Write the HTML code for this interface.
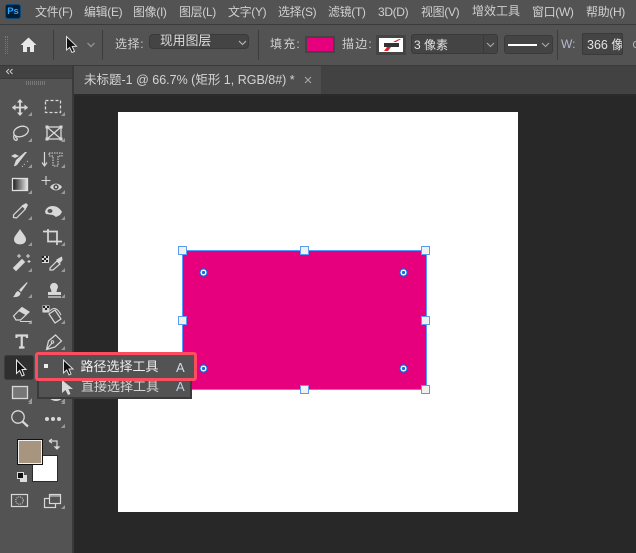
<!DOCTYPE html>
<html lang="zh"><head><meta charset="utf-8"><title>Photoshop</title>
<style>
html,body{margin:0;padding:0}
body{width:636px;height:553px;position:relative;overflow:hidden;background:#282828;font-family:"Liberation Sans","Noto Sans CJK SC",sans-serif;color:#cfcfcf}
.a{position:absolute}
.t{position:absolute;white-space:nowrap;line-height:16px;font-size:12px}
.m{letter-spacing:-.35px}
svg{position:absolute;overflow:visible}
.h{position:absolute;width:9px;height:9px;box-sizing:border-box;background:#f0f0f0;border:1.5px solid #5a9cf0}
.p{position:absolute;width:9px;height:9px;border-radius:50%;background:radial-gradient(circle,#1668d8 0 1.6px,#eaf4ff 1.7px 2.9px,#1a6fe0 3px 4px,#7a2a9a 4.1px 4.5px)}
</style></head><body>
<div class="a" style="left:0;top:0;width:636px;height:24px;background:#535353"></div>
<div class="a" style="left:0;top:24px;width:636px;height:1px;background:#3a3a3a"></div>
<div class="a" style="left:0;top:25px;width:636px;height:40px;background:#535353"></div>
<div class="a" style="left:0;top:65px;width:636px;height:1px;background:#3a3a3a"></div>
<div class="a" style="left:5px;top:4px;width:16px;height:15px;box-sizing:border-box;background:#001e36;border:1px solid #0d4a78;border-radius:3px;color:#31a8ff;font:bold 9.500px/13px 'Liberation Sans',sans-serif;text-align:center">Ps</div>

<div class="t m" style="left:35px;top:4px">文件(F)</div>
<div class="t m" style="left:84px;top:4px">编辑(E)</div>
<div class="t m" style="left:133px;top:4px">图像(I)</div>
<div class="t m" style="left:179px;top:4px">图层(L)</div>
<div class="t m" style="left:228px;top:4px">文字(Y)</div>
<div class="t m" style="left:278px;top:4px">选择(S)</div>
<div class="t m" style="left:328px;top:4px">滤镜(T)</div>
<div class="t m" style="left:378px;top:4px">3D(D)</div>
<div class="t m" style="left:421px;top:4px">视图(V)</div>
<div class="t" style="left:472px;top:3px">增效工具</div>
<div class="t m" style="left:532px;top:4px">窗口(W)</div>
<div class="t m" style="left:586px;top:4px">帮助(H)</div>

<div class="a" style="left:5px;top:36px;width:3px;height:18px;border-left:1px dotted #777;border-right:1px dotted #777;box-sizing:border-box"></div>
<svg style="left:20px;top:37px" width="17" height="16"><path d="M8.500 .5L16.500 8H14V15H10V10H7V15H3V8H.5Z" fill="#e8e8e8"/></svg>
<div class="a" style="left:53px;top:30px;width:1px;height:30px;background:#3c3c3c"></div>
<svg style="left:65px;top:36px" width="13" height="18"><path d="M1.500 .5L1.500 14L4.700 11.500L7 16.500L9.500 15.500L7.200 10.500L11.500 10.200Z" fill="#111" stroke="#e0e0e0" stroke-width="1"/></svg>
<svg style="left:86px;top:42px" width="10" height="6"><path d="M1.500 1L5 4.500L8.500 1" fill="none" stroke="#999" stroke-width="1.200"/></svg>
<div class="a" style="left:102px;top:30px;width:1px;height:30px;background:#3c3c3c"></div>
<div class="t" style="left:115px;top:36px;letter-spacing:.6px">选择:</div>
<div class="a" style="left:149px;top:34px;width:100px;height:15px;box-sizing:border-box;background:#444;border:1px solid #3a3a3a;border-radius:4px"></div>
<div class="t" style="left:160px;top:33px;font-size:12.800px;color:#dedede">现用图层</div>
<svg style="left:238px;top:40px" width="9" height="6"><path d="M1 1L4.500 4.500L8 1" fill="none" stroke="#bbb" stroke-width="1.100"/></svg>
<div class="a" style="left:258px;top:30px;width:1px;height:30px;background:#3c3c3c"></div>
<div class="t" style="left:270px;top:36px;letter-spacing:1.200px">填充:</div>
<div class="a" style="left:305px;top:36px;width:30px;height:17px;box-sizing:border-box;background:#e6007e;border:2px solid #444"></div>
<div class="t" style="left:342px;top:36px;letter-spacing:1.200px">描边:</div>
<div class="a" style="left:376px;top:35px;width:30px;height:20px;box-sizing:border-box;border:3px solid #444;background:#fff"></div>
<div class="a" style="left:384px;top:43px;width:15px;height:4px;background:#333"></div>
<svg style="left:378px;top:37px" width="26" height="15"><path d="M15 5L21 2H23L18 5ZM6 14L9 10H13L10 14Z" fill="#e2202c"/></svg>
<div class="a" style="left:411px;top:34px;width:87px;height:20px;box-sizing:border-box;background:#444;border:1px solid #3a3a3a;border-radius:3px"></div>
<div class="a" style="left:483px;top:35px;width:1px;height:18px;background:#3a3a3a"></div>
<div class="t" style="left:414px;top:37px;color:#e2e2e2;font-size:12px">3 像素</div>
<svg style="left:486px;top:42px" width="9" height="6"><path d="M1 1L4.500 4.500L8 1" fill="none" stroke="#aaa" stroke-width="1.100"/></svg>
<div class="a" style="left:504px;top:35px;width:49px;height:19px;box-sizing:border-box;background:#444;border:1px solid #3a3a3a;border-radius:3px"></div>
<div class="a" style="left:508px;top:44px;width:29px;height:2px;background:#fff"></div>
<svg style="left:541px;top:42px" width="9" height="6"><path d="M1 1L4.500 4.500L8 1" fill="none" stroke="#aaa" stroke-width="1.100"/></svg>
<div class="a" style="left:557px;top:30px;width:1px;height:30px;background:#3c3c3c"></div>
<div class="t" style="left:561px;top:36px;color:#b0bccb">W:</div>
<div class="a" style="left:582px;top:33px;width:41px;height:22px;box-sizing:border-box;background:#444;border:1px solid #3a3a3a;border-radius:2px"></div>
<div class="a" style="left:583px;top:34px;width:39px;height:20px;overflow:hidden"><div class="t" style="left:4px;top:3px;font-size:12.500px;color:#e2e2e2">366 像素</div></div>
<div class="a" style="left:633px;top:41px;width:3px;height:7px;border:1px solid #bbb;border-right:0;border-radius:4px 0 0 4px;box-sizing:border-box"></div>

<!-- tab bar -->
<div class="a" style="left:73px;top:66px;width:563px;height:29px;background:#424242"></div>
<div class="a" style="left:74px;top:66px;width:247px;height:29px;background:#4e4e4e"></div>
<div class="a" style="left:73px;top:94px;width:563px;height:2px;background:#2b2b2b"></div>
<div class="t" style="left:84px;top:72px;color:#d4d4d4;font-size:12.500px">未标题-1 @ 66.7% (矩形 1, RGB/8#) *</div>
<svg style="left:304px;top:76px" width="8" height="8"><path d="M1 1L7 7M7 1L1 7" stroke="#aaa" stroke-width="1"/></svg>

<!-- tool panel -->
<div class="a" style="left:0;top:66px;width:72px;height:487px;background:#535353"></div>
<div class="a" style="left:0;top:66px;width:72px;height:12px;background:#424242"></div>
<div class="a" style="left:0;top:78px;width:72px;height:1px;background:#3a3a3a"></div>
<div class="a" style="left:72px;top:66px;width:2px;height:487px;background:#3a3a3a"></div>
<svg style="left:6px;top:69px" width="7" height="5"><path d="M3 0L.5 2.500L3 5M6.500 0L4 2.500L6.500 5" fill="none" stroke="#ccc" stroke-width="1"/></svg>
<div class="a" style="left:26px;top:81px;width:20px;height:4px;background:repeating-linear-gradient(90deg,#777 0 1px,transparent 1px 2px)"></div>

<svg style="left:0;top:90px" width="72" height="450" fill="none" stroke="#d8d8d8" stroke-width="1.300">
<g fill="#9a9a9a" stroke="none">
<path d="M32 22V26H28ZM65 22V26H61ZM32 48V52H28ZM65 48V52H61ZM32 74V78H28ZM65 74V78H61ZM32 100V104H28ZM65 100V104H61ZM32 126V130H28ZM65 126V130H61ZM32 152V156H28ZM65 152V156H61ZM32 178V182H28ZM65 178V182H61ZM32 204V208H28ZM65 204V208H61ZM32 230V234H28ZM65 230V234H61ZM65 256V260H61ZM32 282V286H28ZM32 308V312H28ZM65 308V312H61ZM65 334V338H61Z"/>
</g>
<!-- move -->
<path d="M20 10V25M12.500 17.500H27.500" stroke-width="1.800"/>
<path d="M20 9L17 12.500H23ZM20 26L17 22.500H23ZM12 17.500L15.500 14.500V20.500ZM28 17.500L24.500 14.500V20.500Z" fill="#d8d8d8" stroke="none"/>
<!-- marquee -->
<rect x="45.500" y="10.500" width="15" height="12" stroke-dasharray="3 2"/>
<!-- lasso -->
<ellipse cx="21" cy="41.500" rx="7.500" ry="5" transform="rotate(-18 21 41.500)"/><path d="M14 45C13 49 15 51 17 50C18 49 16 47 15 47"/>
<!-- frame -->
<rect x="47" y="37" width="14" height="12"/><path d="M47 37L61 49M61 37L47 49"/>
<path d="M45.500 35.500h3v3h-3zM59.500 35.500h3v3h-3zM45.500 47.500h3v3h-3zM59.500 47.500h3v3h-3z" fill="#d8d8d8" stroke="none"/>
<!-- object brush -->
<path d="M27 62L20 71L17 75C15 76 14 77 14 75.500L16 70L25 62Z" fill="#d8d8d8" stroke="none"/><path d="M11 66L15 64L19 66L15 68Z" fill="#d8d8d8" stroke="none"/>
<path d="M24 74l1 1M27 71l1 1M22 76l1 1" stroke-width="1" stroke-dasharray="1 1"/>
<!-- type mask -->
<path d="M44.500 62V76M42 72.500L44.500 76L47 72.500" stroke-width="1.200"/>
<path d="M49 63H62V66H58V76H53V66H49Z" stroke-width="1" stroke-dasharray="1.500 1"/>
<!-- gradient -->
<defs><linearGradient id="g"><stop offset="0" stop-color="#1a1a1a"/><stop offset="1" stop-color="#e6e6e6"/></linearGradient></defs>
<rect x="12.500" y="88.500" width="15" height="12" fill="url(#g)" stroke="#e0e0e0"/>
<!-- plus eye -->
<path d="M46 86V95M41.500 90.500H50.500" stroke-width="1.100"/>
<path d="M50 97C53 92.500 59 92.500 62 97C59 101.500 53 101.500 50 97Z" fill="#d8d8d8" stroke="none"/><circle cx="56" cy="97" r="2.700" fill="#535353" stroke="none"/><circle cx="56" cy="97" r="1.100" fill="#d8d8d8" stroke="none"/>
<!-- eyedropper -->
<path d="M13.500 127.500V125L22.500 116L25.500 119L16.500 128Z" stroke-width="1.200"/><path d="M21.500 115.500L24.500 114L26 113L28 115L26.500 118L25 119Z" fill="#d8d8d8" stroke="none"/>
<!-- spot mask -->
<path d="M45 122C46 115 57 113 62 122L60 125L56 127L53 125L46 124Z" fill="#d8d8d8" stroke="none"/><ellipse cx="50" cy="121" rx="2.500" ry="2" fill="#535353" stroke="none"/>
<!-- drop -->
<path d="M20 139C17.500 143.500 14 146 14 149.500C14 156 26 156 26 149.500C26 146 22.500 143.500 20 139Z" fill="#d8d8d8" stroke="none"/>
<!-- crop -->
<path d="M43 141.500H57V155M48 139V151.500H62" stroke-width="1.700"/>
<!-- wand -->
<path d="M13.500 178L22 169.500L24.500 172L16 180.500Z" fill="#d8d8d8" stroke-width="1"/><path d="M19 164v4M17 166h4M28 164v4M26 166h4M29 170v3M27.500 171.500h3" stroke-width="1"/>
<!-- mask dropper -->
<rect x="42.500" y="166.500" width="6" height="6" fill="#ccc" stroke="#ddd" stroke-width="1"/><path d="M42 166h2v2h-2zM46 166h2v2h-2zM44 168h2v2h-2zM42 170h2v2h-2zM46 170h2v2h-2z" fill="#222" stroke="none"/>
<path d="M50 180V178L57 171L60 174L53 180Z" stroke-width="1.200"/><path d="M56 170L59 168L62 166.500L62.500 170L60 173Z" fill="#d8d8d8" stroke="none"/>
<!-- brush -->
<path d="M27 192L19 200L21 202L27.500 193Z" fill="#d8d8d8" stroke="none"/><path d="M18 201C15 202 15.500 205 13 207C17 207.500 20.500 206 20.500 203Z" fill="#d8d8d8" stroke="none"/>
<!-- stamp -->
<path d="M51 199.500A4 4 0 1 1 57 199.500L56.500 202H61V205H48V202H51.500Z" fill="#d8d8d8" stroke="none"/><path d="M48 207H61" stroke-width="1.300"/>
<!-- eraser -->
<path d="M13.500 226L22 217.500L29 222L20.500 230H16Z" stroke-width="1.200"/><path d="M18.500 221L22 217.500L29 222L25.500 225Z" fill="#d8d8d8" stroke="none"/><path d="M20 231.500H31" stroke-width="1"/>
<!-- history -->
<rect x="43" y="216" width="6" height="6" fill="#ccc" stroke="#ddd" stroke-width="1"/><path d="M43 216h2v2h-2zM47 216h2v2h-2zM45 218h2v2h-2z" fill="#222" stroke="none"/>
<path d="M49 224L55 220L61 229L55 233Z" stroke-width="1.200"/><path d="M50 221C54 216 58 219 61 225" stroke-width="1"/>
<!-- T -->
<path d="M16.500 248V245.500H27V248M21.750 245.500V257.500M19 257.500H24.500" stroke-width="2.200"/>
<!-- pen -->
<path d="M46.500 259.500L48.500 251L55.500 245L61.500 251L55 257ZM46.500 259.500L52 253" stroke-width="1.200"/><circle cx="52.500" cy="252" r="1.200" stroke-width="1"/>
</svg>

<!-- active tool -->
<div class="a" style="left:4px;top:355px;width:30px;height:25px;background:#2f2f2f;border-radius:3px;box-shadow:inset 0 0 0 1px #3c3c3c"></div>
<svg style="left:15px;top:359px" width="12" height="18"><path d="M1.500 1V14.500L4.700 11.500L7 17L9.200 16L7 10.500H11Z" fill="#111" stroke="#e8e8e8" stroke-width="1"/></svg>

<svg style="left:0;top:380px" width="72" height="150" fill="none" stroke="#d8d8d8" stroke-width="1.300">
<rect x="12.500" y="6.500" width="15" height="12" fill="#777" stroke="#d8d8d8"/>
<path d="M49 18Q56 24 63 18Z" fill="#d8d8d8" stroke="none"/>
<path d="M32 20V24H28ZM65 20V24H61Z" fill="#9a9a9a" stroke="none"/>
<!-- zoom -->
<circle cx="18" cy="37" r="6.200"/><path d="M22.500 41.500L28 46.500" stroke-width="2.200"/>
<!-- more -->
<circle cx="47" cy="39" r="2" fill="#d8d8d8" stroke="none"/><circle cx="53" cy="39" r="2" fill="#d8d8d8" stroke="none"/><circle cx="59" cy="39" r="2" fill="#d8d8d8" stroke="none"/>
<path d="M65 44V48H61Z" fill="#9a9a9a" stroke="none"/>
<!-- swap -->
<path d="M50 61H57V68M49 61L52 59M49 61L52 63M55 67H59L57 69Z" stroke-width="1.200"/>
<!-- quick mask -->
<rect x="11.500" y="114.500" width="16" height="12" stroke-width="1.200"/><circle cx="19.500" cy="120.500" r="3.700" stroke-width="1" stroke-dasharray="1 1"/>
<!-- screen -->
<rect x="44.500" y="118.500" width="11" height="9" stroke-width="1.200"/><rect x="49.500" y="114.500" width="11" height="9" fill="#535353" stroke-width="1.200"/><path d="M49.500 116H60.500" stroke-width="1"/>
<path d="M65 125V129H61Z" fill="#9a9a9a" stroke="none"/>
</svg>
<div class="a" style="left:32px;top:455px;width:26px;height:27px;box-sizing:border-box;background:#fff;border:1px solid #2c2c2c"></div>
<div class="a" style="left:17px;top:439px;width:26px;height:26px;box-sizing:border-box;background:#a8957f;border:1px solid #111;box-shadow:inset 0 0 0 1px #f0f0f0"></div>
<div class="a" style="left:20px;top:475px;width:7px;height:7px;background:#ddd"></div>
<div class="a" style="left:17px;top:472px;width:7px;height:7px;box-sizing:border-box;background:#111;border:1px solid #ddd"></div>

<!-- canvas -->
<div class="a" style="left:118px;top:112px;width:400px;height:400px;background:#fff"></div>
<div class="a" style="left:182px;top:250px;width:244.500px;height:140px;box-sizing:border-box;background:#e6007e;border:1.500px solid #4f9bff"></div>
<div class="h" style="left:178px;top:246px"></div><div class="h" style="left:300px;top:246px"></div><div class="h" style="left:421px;top:246px"></div>
<div class="h" style="left:178px;top:316px"></div><div class="h" style="left:421px;top:316px"></div>
<div class="h" style="left:178px;top:385px"></div><div class="h" style="left:300px;top:385px"></div><div class="h" style="left:421px;top:385px"></div>
<div class="p" style="left:199px;top:268px"></div><div class="p" style="left:399px;top:268px"></div>
<div class="p" style="left:199px;top:364px"></div><div class="p" style="left:399px;top:364px"></div>

<!-- flyout -->
<div class="a" style="left:37px;top:355px;width:155px;height:44px;box-sizing:border-box;background:#535353;border:2px solid #3a3a3a"></div>
<svg style="left:61px;top:379px" width="14" height="17"><path d="M1 1V14L4.500 11L7 16L9.500 15L7.500 10H12Z" fill="#d8d8d8"/></svg>
<div class="t" style="left:81px;top:379px;font-size:13px;color:#d4d4d4">直接选择工具</div>
<div class="t" style="left:176px;top:379px;font-size:13px;color:#c0cde0">A</div>
<div class="a" style="left:35px;top:352px;width:162px;height:29px;box-sizing:border-box;background:#535353;border:3.500px solid #fb4d5f;border-radius:3px"></div>
<div class="a" style="left:44px;top:364px;width:4px;height:4px;background:#eee"></div>
<svg style="left:62px;top:359px" width="13" height="17"><path d="M1.500 1V14L4.700 11L7 16L9 15L7 10H11Z" fill="#111" stroke="#e0e0e0" stroke-width="1"/></svg>
<div class="t" style="left:80.500px;top:359px;font-size:13px;color:#eeeeee">路径选择工具</div>
<div class="t" style="left:176px;top:360px;font-size:13px;color:#d0dcee">A</div>
</body></html>
